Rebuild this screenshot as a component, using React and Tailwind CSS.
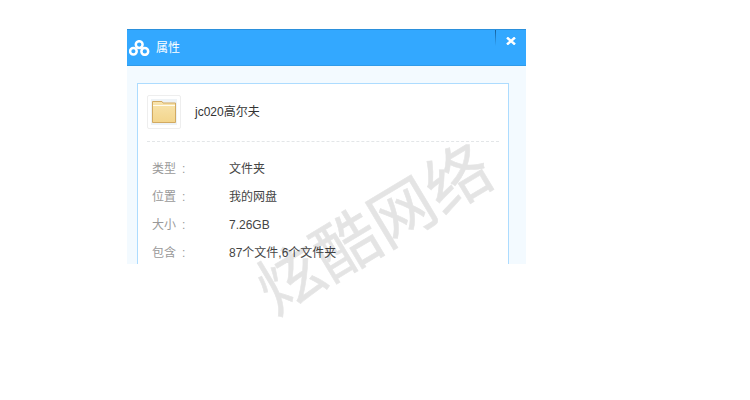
const rows = [
    ['类型', '文件夹'],
    ['位置', '我的网盘'],
    ['大小', '7.26GB'],
    ['包含', '87个文件,6个文件夹'],
];

const cjk = "font-['Liberation_Sans','Noto_Sans_CJK_SC',sans-serif]";

export default function App() {
    return (
        <div className={`relative w-[750px] h-[400px] overflow-hidden bg-white pt-[29px] pl-[127px] ${cjk}`}>
            <div className="w-[399px] h-[235px] overflow-hidden bg-[#f3faff]">
                {/* Title bar */}
                <div className="h-[37px] flex items-center bg-[#33a8ff] border-t border-b border-t-[#2b90dc] border-b-[#2f9be9] relative">
                    <svg width="21" height="16" viewBox="0 0 21 16" className="ml-[2px]" fill="none" stroke="white" strokeWidth="2.5">
                        <circle cx="10.2" cy="4.6" r="3.4" />
                        <circle cx="4.4" cy="11.2" r="3.3" />
                        <circle cx="15.8" cy="11.4" r="3.4" />
                    </svg>
                    <span className="ml-[6px] pt-[1px] text-[12px] text-white">属性</span>
                    <div className="ml-auto mr-[30px] w-px h-[16px] self-start bg-gradient-to-b from-[#15609c] to-[#33a8ff]" />
                    <svg width="10" height="8" viewBox="0 0 10 8" className="absolute right-[10px] top-[7px]" stroke="white" strokeWidth="2.4">
                        <path d="M1 0.5L9 7.5M9 0.5L1 7.5" />
                    </svg>
                </div>
                {/* Info card */}
                <div className="mt-[17px] ml-[10px] w-[372px] h-[200px] bg-white border border-[#addcff] px-[9px] pt-[11px]">
                    <div className="flex items-center h-[47px] w-[352px] border-b border-dashed border-[#e3e6e8]">
                        <div className="w-[34px] h-[34px] mb-[12px] flex items-center justify-center border border-[#eeeeee] rounded-[2px]">
                            <div className="w-[26px] h-[26px] bg-[#edf2f6] flex items-center justify-center">
                                <svg width="24" height="22" viewBox="0 0 24 22">
                                    <defs>
                                        <linearGradient id="folder" x1="0" y1="0" x2="0" y2="1">
                                            <stop offset="0" stopColor="#f8e4ae" />
                                            <stop offset="1" stopColor="#f3d58c" />
                                        </linearGradient>
                                    </defs>
                                    <path d="M0.5 21.5V0.5H10L11 2H23.5V21.5Z" fill="url(#folder)" stroke="#d2aa62" />
                                    <rect x="1" y="4" width="22" height="1" fill="#fffbee" />
                                </svg>
                            </div>
                        </div>
                        <span className="ml-[14px] mb-[12px] text-[12px] text-[#333333]">jc020高尔夫</span>
                    </div>
                    <div className="pt-[13px] pl-[5px]">
                        {rows.map(([label, value]) => (
                            <div key={label} className="flex h-[28px] items-center text-[12px]">
                                <span className="w-[77px] text-[#999999]">{label}<span className="ml-[6px]">:</span></span>
                                <span className="text-[#444444]">{value}</span>
                            </div>
                        ))}
                    </div>
                </div>
            </div>
            {/* Watermark */}
            <div className="absolute left-[245px] top-[197px] w-[260px] flex justify-center text-[65px] leading-[66px] whitespace-nowrap text-black opacity-10 [-webkit-text-stroke:0.6px_black] -rotate-[31deg] pointer-events-none">
                炫酷网络
            </div>
        </div>
    );
}
